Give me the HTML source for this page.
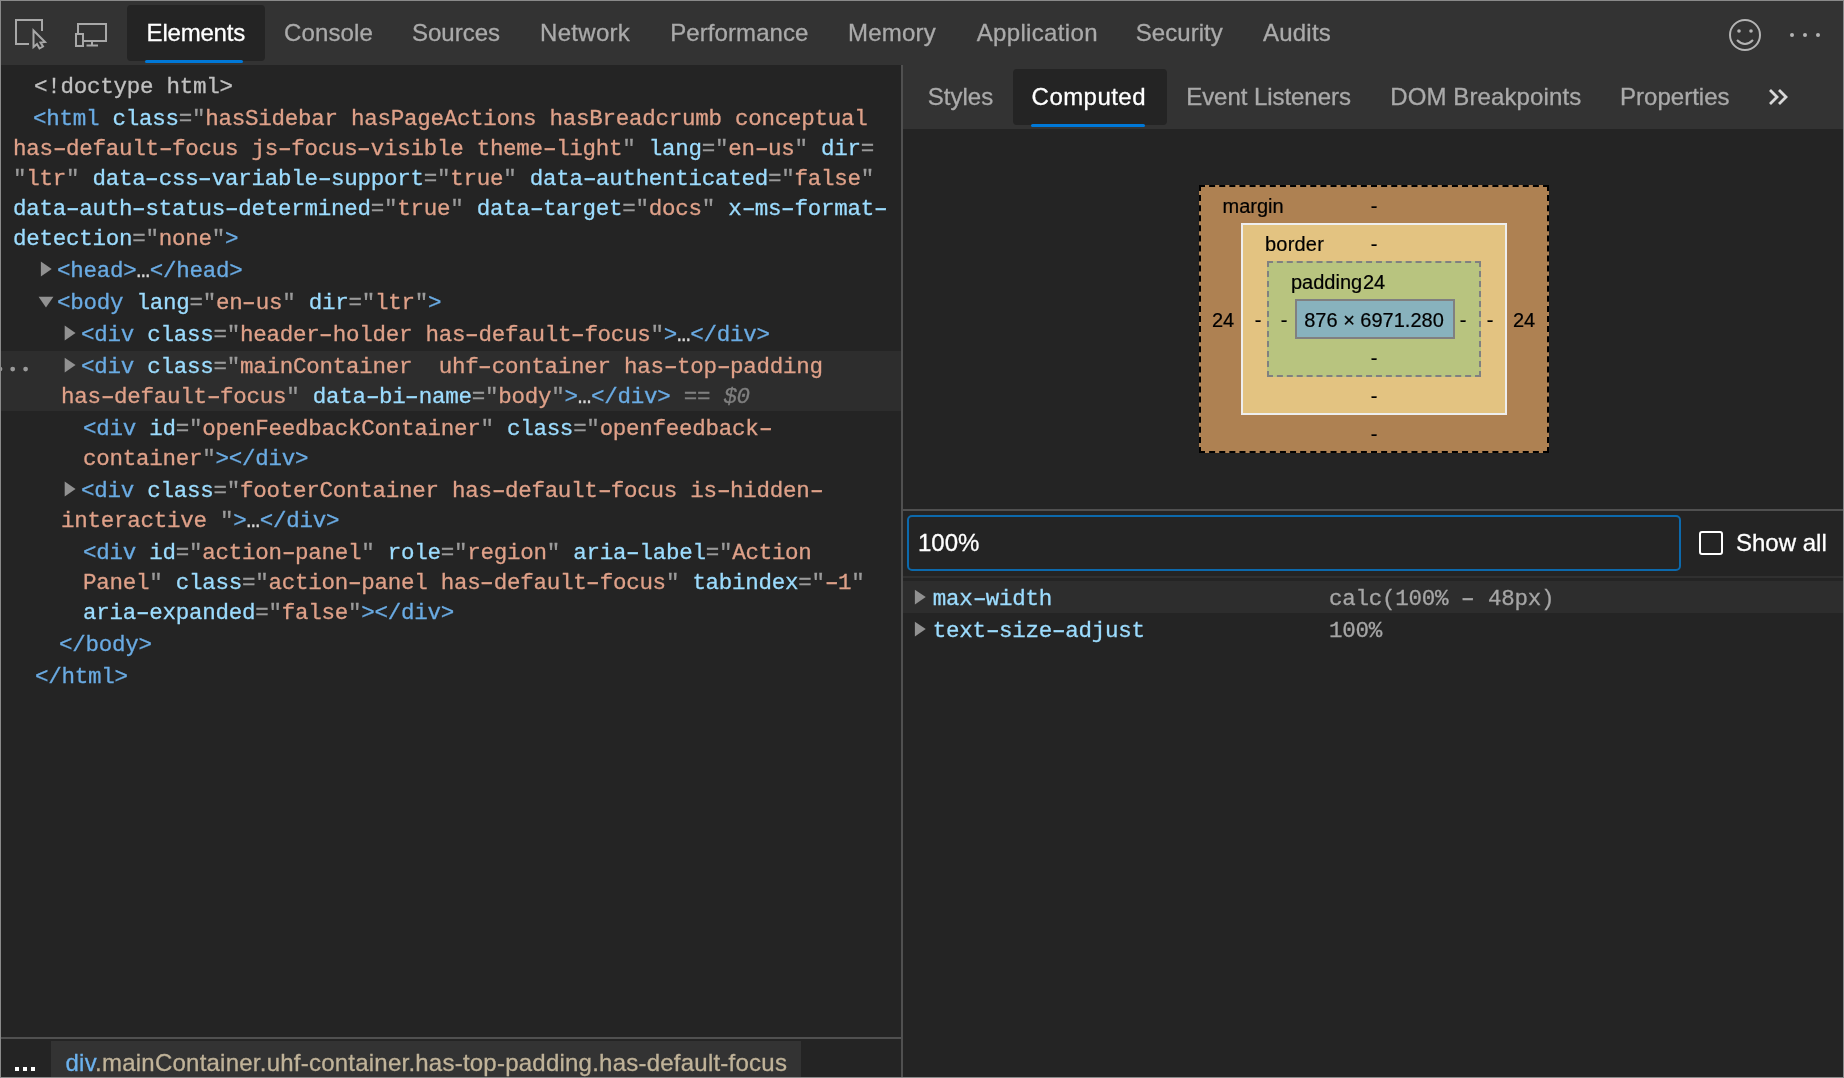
<!DOCTYPE html>
<html lang="en">
<head>
<meta charset="utf-8">
<title>DevTools - Elements - Computed</title>
<style>
*{box-sizing:border-box;margin:0;padding:0}
html,body{width:1844px;height:1078px;overflow:hidden;background:#242424}
body{font-family:"Liberation Sans",sans-serif;font-size:24px;color:#aaa;position:relative}
#app{will-change:transform;position:absolute;left:0;top:0;width:1844px;height:1078px;background:#242424;overflow:hidden}
.abs{position:absolute}
/* frame */
#bt{left:0;top:0;width:1844px;height:1px;background:#8a8a8a}
#bl{left:0;top:0;width:1px;height:1078px;background:#8a8a8a}
#br{left:1843px;top:0;width:1px;height:1078px;background:#8a8a8a}
#bb{left:0;top:1077px;width:1844px;height:1px;background:#8a8a8a}
/* main toolbar */
#toolbar{left:1px;top:1px;width:1842px;height:64px;background:#333333}
.tab{position:absolute;top:1px;height:64px;-webkit-text-stroke:0.3px;line-height:64px;white-space:nowrap;color:#aaaaaa;font-size:24px}
#tab-sel{left:127px;top:5px;width:138px;height:56px;background:#242424;border-radius:4px}
#tab-ul{left:145px;top:60px;width:98px;height:3px;background:#0078d7;border-radius:1.5px}
/* tree */
#tree{left:1px;top:65px;width:900px;height:972px;background:#242424;font-family:"Liberation Mono",monospace;font-size:22px;line-height:30px;white-space:pre;color:#c8c8c8}
.ln{position:absolute;height:30px;line-height:30px;white-space:pre}
.t{color:#6aabe3}
.n{color:#9cdcfe}
.v{color:#dfa189}
.q{color:#9a9a9a}
.g{color:#c0c0c0}
.e{color:#d8d8d8}
.z{color:#7f7f7f}
.h{display:inline-block;transform:scaleX(1.6)}
.arrow{position:absolute;width:0;height:0}
.ar{border-left:11px solid #8e8e8e;border-top:7px solid transparent;border-bottom:7px solid transparent}
.ad{border-top:11px solid #8e8e8e;border-left:7px solid transparent;border-right:7px solid transparent}
#selrow{left:1px;top:351px;width:900px;height:60px;background:#2d2d2d}
/* splitter */
#split{left:901px;top:65px;width:2px;height:1013px;background:#505050}
/* breadcrumbs */
#crline{left:1px;top:1037px;width:900px;height:2px;background:#505050}
#crumb{left:51px;top:1041px;width:750px;height:36px;background:#333333}
#crtext{-webkit-text-stroke:0.3px;letter-spacing:0.23px;left:65.5px;top:1042px;height:42px;line-height:42px;font-size:24px;white-space:nowrap;color:#c0b399}
/* sidebar */
#sbar{left:903px;top:65px;width:940px;height:64px;background:#333333}
#stab-sel{left:1013px;top:69px;width:154px;height:56px;background:#242424;border-radius:4px}
#stab-ul{left:1031px;top:124px;width:114px;height:3px;background:#0078d7;border-radius:1.5px}
.stab{-webkit-text-stroke:0.3px;position:absolute;top:65px;height:64px;line-height:64px;white-space:nowrap;color:#aaaaaa;font-size:24px}
/* box model */
.bm{-webkit-text-stroke:0.2px;position:absolute;font-size:20px;color:#000;line-height:24px;white-space:nowrap}
.bmc{transform:translateX(-50%)}
#m-box{left:1199px;top:185px;width:350px;height:268px;background:#ae8152;border:2px dashed #000}
#b-box{left:1241px;top:223px;width:266px;height:192px;background:#e3c381;border:2px solid #eeeeee}
#p-box{left:1267px;top:261px;width:214px;height:116px;background:#b8c47f;border:2px dashed #808080}
#c-box{left:1295px;top:299px;width:160px;height:40px;background:#88b2bd;border:2px solid #808080}
/* filter */
#fline{left:903px;top:509px;width:940px;height:2px;background:#505050}
#fline2{left:903px;top:576px;width:940px;height:2px;background:#303030}
#finput{left:907px;top:515px;width:774px;height:56px;border:2px solid #0c69ac;border-radius:5px;background:#242424}
#ftext{-webkit-text-stroke:0.3px;left:918px;top:515px;height:56px;line-height:56px;color:#fff;font-size:24px}
#cb{left:1699px;top:531px;width:24px;height:24px;border:2px solid #fff;border-radius:3px}
#cbl{-webkit-text-stroke:0.3px;left:1736px;top:515px;height:56px;line-height:56px;color:#fff;font-size:24px;white-space:nowrap}
#prow{left:903px;top:581px;width:940px;height:32px;background:#2d2d2d}
.pn{position:absolute;font-family:"Liberation Mono",monospace;font-size:22.5px;line-height:32px;height:32px;white-space:pre;color:#9cdcfe;letter-spacing:-0.257px;-webkit-text-stroke:0.3px}
.pv{color:#a6a6a6}
</style>
</head>
<body>
<div id="app">
  <div class="abs" id="toolbar"></div>
  <div class="abs" id="tab-sel"></div>
  <div class="abs" id="tab-ul"></div>
  <!-- toolbar icons -->
  <svg class="abs" style="left:0;top:0" width="130" height="66" viewBox="0 0 130 66" fill="none" stroke="#a8a8a8" stroke-width="2">
    <path d="M29 44H16V20H42V31"/>
    <path d="M33.5 30.5V47L37 44L39.5 48.5L43 46.5L40.5 42.5L45 42Z" stroke-linejoin="miter"/>
    <path d="M78 33V24H106V41H84"/>
    <rect x="76" y="34" width="7" height="12"/>
    <path d="M92 41V45M86.5 45.5H98"/>
  </svg>
  <div class="tab" style="left:146.6px;letter-spacing:-0.2px;color:#fff">Elements</div>
  <div class="tab" style="left:284px;letter-spacing:0.13px">Console</div>
  <div class="tab" style="left:412px;letter-spacing:0px">Sources</div>
  <div class="tab" style="left:540px;letter-spacing:0.3px">Network</div>
  <div class="tab" style="left:670.3px;letter-spacing:0.07px">Performance</div>
  <div class="tab" style="left:848px;letter-spacing:0.2px">Memory</div>
  <div class="tab" style="left:976.7px;letter-spacing:0.34px">Application</div>
  <div class="tab" style="left:1135.8px;letter-spacing:0.05px">Security</div>
  <div class="tab" style="left:1262.9px;letter-spacing:0.24px">Audits</div>
  <svg class="abs" style="left:1720px;top:10px" width="110" height="50" viewBox="0 0 110 50" fill="none" stroke="#b4b4b4" stroke-width="2">
    <circle cx="25" cy="25" r="15"/>
    <circle cx="19" cy="21" r="1.8" fill="#b4b4b4" stroke="none"/>
    <circle cx="31" cy="21" r="1.8" fill="#b4b4b4" stroke="none"/>
    <path d="M17 30Q25 38 33 30"/>
    <circle cx="72" cy="25" r="2" fill="#b4b4b4" stroke="none"/>
    <circle cx="85" cy="25" r="2" fill="#b4b4b4" stroke="none"/>
    <circle cx="98" cy="25" r="2" fill="#b4b4b4" stroke="none"/>
  </svg>

  <!-- elements tree -->
  <div class="abs" id="tree"></div>
  <div class="abs" id="selrow"></div>
  <div id="treetext" style="font-family:'Liberation Mono',monospace;font-size:22.5px;color:#c8c8c8;letter-spacing:-0.257px;-webkit-text-stroke:0.3px">
    <div class="ln g" style="left:34px;top:72px">&lt;!doctype html&gt;</div>
    <div class="ln" style="left:33px;top:104px"><span class="t">&lt;html</span> <span class="n">class</span><span class="q">="</span><span class="v">hasSidebar hasPageActions hasBreadcrumb conceptual</span></div>
    <div class="ln" style="left:13px;top:134px"><span class="v">has<span class="h">-</span>default<span class="h">-</span>focus js<span class="h">-</span>focus<span class="h">-</span>visible theme<span class="h">-</span>light</span><span class="q">"</span> <span class="n">lang</span><span class="q">="</span><span class="v">en<span class="h">-</span>us</span><span class="q">"</span> <span class="n">dir</span><span class="q">=</span></div>
    <div class="ln" style="left:13px;top:164px"><span class="q">"</span><span class="v">ltr</span><span class="q">"</span> <span class="n">data<span class="h">-</span>css<span class="h">-</span>variable<span class="h">-</span>support</span><span class="q">="</span><span class="v">true</span><span class="q">"</span> <span class="n">data<span class="h">-</span>authenticated</span><span class="q">="</span><span class="v">false</span><span class="q">"</span></div>
    <div class="ln" style="left:13px;top:194px"><span class="n">data<span class="h">-</span>auth<span class="h">-</span>status<span class="h">-</span>determined</span><span class="q">="</span><span class="v">true</span><span class="q">"</span> <span class="n">data<span class="h">-</span>target</span><span class="q">="</span><span class="v">docs</span><span class="q">"</span> <span class="n">x<span class="h">-</span>ms<span class="h">-</span>format<span class="h">-</span></span></div>
    <div class="ln" style="left:13px;top:224px"><span class="n">detection</span><span class="q">="</span><span class="v">none</span><span class="q">"</span><span class="t">&gt;</span></div>
    <div class="ln" style="left:57px;top:256px"><span class="t">&lt;head&gt;</span><span class="e">…</span><span class="t">&lt;/head&gt;</span></div>
    <div class="ln" style="left:57px;top:288px"><span class="t">&lt;body</span> <span class="n">lang</span><span class="q">="</span><span class="v">en<span class="h">-</span>us</span><span class="q">"</span> <span class="n">dir</span><span class="q">="</span><span class="v">ltr</span><span class="q">"</span><span class="t">&gt;</span></div>
    <div class="ln" style="left:81px;top:320px"><span class="t">&lt;div</span> <span class="n">class</span><span class="q">="</span><span class="v">header<span class="h">-</span>holder has<span class="h">-</span>default<span class="h">-</span>focus</span><span class="q">"</span><span class="t">&gt;</span><span class="e">…</span><span class="t">&lt;/div&gt;</span></div>
    <svg class="abs" style="left:0;top:360px" width="32" height="16"><circle cx="0" cy="9.1" r="2.4" fill="#9a9a9a"/><circle cx="12.7" cy="9.1" r="2.4" fill="#9a9a9a"/><circle cx="25.6" cy="9.1" r="2.4" fill="#9a9a9a"/></svg>
    <div class="ln" style="left:81px;top:352px"><span class="t">&lt;div</span> <span class="n">class</span><span class="q">="</span><span class="v">mainContainer  uhf<span class="h">-</span>container has<span class="h">-</span>top<span class="h">-</span>padding</span></div>
    <div class="ln" style="left:61px;top:382px"><span class="v">has<span class="h">-</span>default<span class="h">-</span>focus</span><span class="q">"</span> <span class="n">data<span class="h">-</span>bi<span class="h">-</span>name</span><span class="q">="</span><span class="v">body</span><span class="q">"</span><span class="t">&gt;</span><span class="e">…</span><span class="t">&lt;/div&gt;</span><span class="z"> == <i>$0</i></span></div>
    <div class="ln" style="left:83px;top:414px"><span class="t">&lt;div</span> <span class="n">id</span><span class="q">="</span><span class="v">openFeedbackContainer</span><span class="q">"</span> <span class="n">class</span><span class="q">="</span><span class="v">openfeedback<span class="h">-</span></span></div>
    <div class="ln" style="left:83px;top:444px"><span class="v">container</span><span class="q">"</span><span class="t">&gt;&lt;/div&gt;</span></div>
    <div class="ln" style="left:81px;top:476px"><span class="t">&lt;div</span> <span class="n">class</span><span class="q">="</span><span class="v">footerContainer has<span class="h">-</span>default<span class="h">-</span>focus is<span class="h">-</span>hidden<span class="h">-</span></span></div>
    <div class="ln" style="left:61px;top:506px"><span class="v">interactive </span><span class="q">"</span><span class="t">&gt;</span><span class="e">…</span><span class="t">&lt;/div&gt;</span></div>
    <div class="ln" style="left:83px;top:538px"><span class="t">&lt;div</span> <span class="n">id</span><span class="q">="</span><span class="v">action<span class="h">-</span>panel</span><span class="q">"</span> <span class="n">role</span><span class="q">="</span><span class="v">region</span><span class="q">"</span> <span class="n">aria<span class="h">-</span>label</span><span class="q">="</span><span class="v">Action</span></div>
    <div class="ln" style="left:83px;top:568px"><span class="v">Panel</span><span class="q">"</span> <span class="n">class</span><span class="q">="</span><span class="v">action<span class="h">-</span>panel has<span class="h">-</span>default<span class="h">-</span>focus</span><span class="q">"</span> <span class="n">tabindex</span><span class="q">="</span><span class="v"><span class="h">-</span>1</span><span class="q">"</span></div>
    <div class="ln" style="left:83px;top:598px"><span class="n">aria<span class="h">-</span>expanded</span><span class="q">="</span><span class="v">false</span><span class="q">"</span><span class="t">&gt;&lt;/div&gt;</span></div>
    <div class="ln" style="left:59px;top:630px"><span class="t">&lt;/body&gt;</span></div>
    <div class="ln" style="left:35px;top:662px"><span class="t">&lt;/html&gt;</span></div>
  </div>

  <!-- breadcrumbs -->
  <div class="abs" id="crline"></div>
  <div class="abs" id="crumb"></div>
  <svg class="abs" style="left:10px;top:1060px" width="30" height="16"><rect x="5" y="7" width="4" height="4" fill="#fff"/><rect x="13" y="7" width="4" height="4" fill="#fff"/><rect x="21" y="7" width="4" height="4" fill="#fff"/></svg>
  <div class="abs" id="crtext"><span style="color:#6cb2ee">div</span>.mainContainer.uhf-container.has-top-padding.has-default-focus</div>

  <!-- splitter -->
  <div class="abs" id="split"></div>

  <!-- sidebar tabs -->
  <div class="abs" id="sbar"></div>
  <div class="abs" id="stab-sel"></div>
  <div class="abs" id="stab-ul"></div>
  <div class="stab" style="left:927.8px;letter-spacing:0px">Styles</div>
  <div class="stab" style="left:1031.6px;letter-spacing:0.45px;color:#fff">Computed</div>
  <div class="stab" style="left:1186.2px;letter-spacing:-0.05px">Event Listeners</div>
  <div class="stab" style="left:1390.2px;letter-spacing:0.12px">DOM Breakpoints</div>
  <div class="stab" style="left:1620.1px;letter-spacing:0px">Properties</div>
  <svg class="abs" style="left:1764px;top:85px" width="30" height="24" viewBox="0 0 30 24" fill="none" stroke="#d8d8d8" stroke-width="2.8"><path d="M6 5L13 12L6 19M15 5L22 12L15 19"/></svg>

  <!-- box model -->
  <div class="abs" id="m-box"></div>
  <div class="abs" id="b-box"></div>
  <div class="abs" id="p-box"></div>
  <div class="abs" id="c-box"></div>
  <div class="bm" style="left:1222.5px;top:194px">margin</div>
  <div class="bm bmc" style="left:1374px;top:194px">-</div>
  <div class="bm" style="left:1265px;top:232px;letter-spacing:0.2px">border</div>
  <div class="bm bmc" style="left:1374px;top:232px">-</div>
  <div class="bm" style="left:1291px;top:270px">padding</div>
  <div class="bm bmc" style="left:1374px;top:270px">24</div>
  <div class="bm bmc" style="left:1374px;top:308px">876 × 6971.280</div>
  <div class="bm bmc" style="left:1223px;top:308px">24</div>
  <div class="bm bmc" style="left:1258px;top:308px">-</div>
  <div class="bm bmc" style="left:1284px;top:308px">-</div>
  <div class="bm bmc" style="left:1463px;top:308px">-</div>
  <div class="bm bmc" style="left:1490px;top:308px">-</div>
  <div class="bm bmc" style="left:1524px;top:308px">24</div>
  <div class="bm bmc" style="left:1374px;top:346px">-</div>
  <div class="bm bmc" style="left:1374px;top:384px">-</div>
  <div class="bm bmc" style="left:1374px;top:422px">-</div>

  <!-- filter -->
  <div class="abs" id="fline"></div>
  <div class="abs" id="finput"></div>
  <div class="abs" id="ftext">100%</div>
  <div class="abs" id="cb"></div>
  <div class="abs" id="cbl">Show all</div>
  <div class="abs" id="fline2"></div>
  <div class="abs" id="prow"></div>
  <div class="pn" style="left:932.8px;top:583px">max<span class="h">-</span>width</div>
  <div class="pn pv" style="left:1329px;top:583px">calc(100% <span class="h">-</span> 48px)</div>
  <div class="pn" style="left:932.8px;top:615px">text<span class="h">-</span>size<span class="h">-</span>adjust</div>
  <div class="pn pv" style="left:1329px;top:615px">100%</div>

  <svg class="abs" style="left:0;top:0" width="1844" height="1078" viewBox="0 0 1844 1078" fill="#919191"><polygon points="40.85,261.60 51.70,269.00 40.85,276.40"/><polygon points="38.60,296.80 53.40,296.80 46.00,307.60"/><polygon points="64.70,325.60 75.55,333.00 64.70,340.40"/><polygon points="64.70,357.70 75.55,365.10 64.70,372.50"/><polygon points="64.70,481.60 75.55,489.00 64.70,496.40"/><polygon points="914.90,589.70 925.75,597.10 914.90,604.50"/><polygon points="914.90,621.70 925.75,629.10 914.90,636.50"/></svg>

  <!-- frame -->
  <div class="abs" id="bt"></div>
  <div class="abs" id="bl"></div>
  <div class="abs" id="br"></div>
  <div class="abs" id="bb"></div>
</div>
</body>
</html>
